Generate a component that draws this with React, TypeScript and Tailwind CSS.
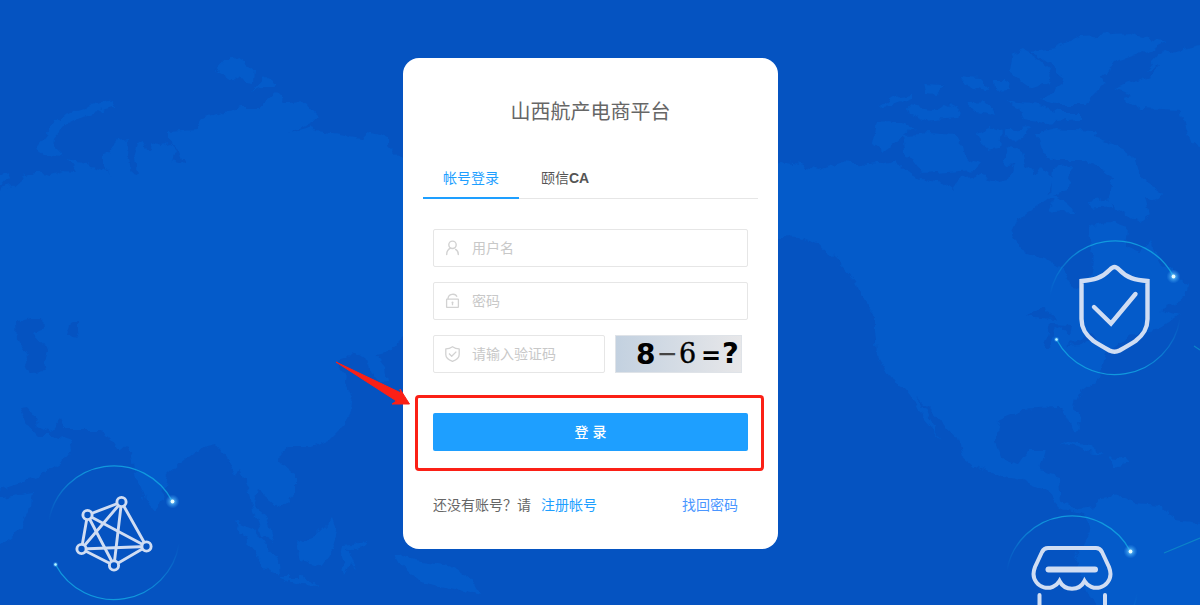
import React, { useState } from 'react';

const LAND = [
  // Europe and Asia
  'M-20 190L0 190L12 187L22 178L38 172L50 175L64 171L76 172L68 160L90 165L108 172L112 178L104 165L104 155L110 153L116 140L130 138L128 155L132 172L138 174L134 155L138 142L143 140L146 150L150 150L152 142L160 145L170 143L176 150L170 162L184 165L178 148L168 140L168 132L195 130L200 120L225 112L240 108L258 108L275 93L285 103L305 102L317 115L312 122L288 133L312 126L316 131L340 134L362 138L368 132L388 138L388 145L403 160L420 200L420 320L400 340L388 353L375 355L386 368L388 382L378 384L368 362L352 351L343 360L337 362L347 375L345 385L352 397L350 412L345 425L330 440L310 448L290 448L282 455L281 463L295 475L295 495L280 508L270 500L257 490L252 510L248 487L240 470L235 475L228 460L216 444L200 448L185 460L167 475L163 500L155 512L145 500L135 475L131 452L128 445L120 452L112 440L102 430L65 430L60 420L50 432L38 425L27 407L20 408L28 424L38 435L55 435L70 440L72 450L62 463L40 476L0 490L-20 494Z',
  'M-20 500L0 498L33 493L30 510L20 530L0 545L-20 550Z',
  'M113 100L100 103L80 110L65 115L55 120L50 130L36 148L45 155L62 157L53 148L54 138L65 125L85 115L114 107Z',
  'M216 70L225 60L236 57L243 62L255 72L254 82L240 80L228 77Z',
  'M252 91L265 77L278 82L275 87L262 87Z',
  'M0 175L8 173L10 178L3 186L0 188Z',
  'M235 522L255 530L280 560L281 577L268 572L250 545Z',
  'M281 577L300 577L318 586L300 585Z',
  'M250 503L265 515L274 543L262 535Z',
  'M296 543L315 535L332 518L338 533L333 550L322 566L300 560Z',
  'M343 545L368 542L366 545L348 550L356 570L350 562L345 575L341 557Z',
  'M395 553L415 560L450 565L470 578L480 595L450 588L420 582L402 566Z',
  // North and South America
  'M760 165L780 162L800 165L818 170L840 163L870 165L890 162L905 168L920 178L940 180L952 190L960 178L975 175L1000 182L1008 180L1015 160L1024 162L1035 176L1040 168L1052 180L1048 192L1060 196L1038 205L1020 218L1012 235L1020 250L1045 260L1062 270L1072 285L1076 290L1090 275L1094 255L1088 225L1110 222L1128 228L1126 246L1140 252L1150 240L1160 262L1188 285L1186 298L1160 310L1180 316L1160 328L1130 335L1105 355L1100 378L1078 395L1075 408L1079 425L1075 432L1067 415L1060 408L1020 410L1000 418L996 440L1003 460L1020 464L1030 450L1046 450L1040 470L1060 477L1062 502L1080 510L1095 508L1100 498L1120 495L1135 503L1160 505L1175 520L1220 525L1220 620L1100 620L1075 560L1090 530L1085 515L1060 508L1045 490L1020 480L1005 477L975 466L962 455L958 440L930 410L918 398L925 410L940 438L925 420L912 395L905 387L890 378L877 355L875 330L875 315L860 295L856 280L835 258L820 245L800 238L760 236Z',
  // Arctic islands
  'M876 122L890 121L915 128L900 138L883 152L872 142Z',
  'M903 135L930 133L955 135L963 145L966 158L982 162L975 170L950 172L922 174L905 152Z',
  'M878 108L895 97L912 94L912 99L892 106Z',
  'M908 107L935 110L945 103L960 110L957 118L925 121L910 115Z',
  'M924 84L944 85L936 94L926 93Z',
  'M960 76L980 78L990 88L984 90L966 84Z',
  'M966 104L990 103L996 116L975 112Z',
  'M995 81L1005 81L1009 90L996 91Z',
  'M1010 72L1012 55L1024 50L1040 60L1052 70L1048 82L1030 88Z',
  'M1028 50L1055 47L1080 36L1130 33L1165 43L1150 50L1120 60L1100 75L1104 84L1092 96L1088 106L1060 106L1040 100L1062 84L1058 70L1050 64Z',
  'M1006 101L1030 104L1060 112L1080 112L1080 120L1045 123L1024 120L1020 108Z',
  'M976 133L990 128L1003 132L1000 148L990 150L980 142Z',
  'M1008 129L1030 127L1022 138L1012 142L1006 136Z',
  'M1002 158L1010 146L1022 152L1025 163L1008 165Z',
  'M1036 133L1055 128L1096 130L1094 138L1108 142L1124 152L1136 160L1142 180L1162 192L1155 200L1145 196L1150 215L1140 222L1120 210L1108 200L1114 178L1095 165L1080 160L1055 160L1042 152Z',
  'M1052 168L1072 165L1068 190L1050 195Z',
  'M1048 210L1056 196L1076 211L1055 212Z',
  'M1088 202L1108 198L1112 206L1090 208Z',
  'M1115 88L1150 76L1160 65L1146 70L1160 54L1200 45L1220 42L1220 158L1190 142L1180 110L1140 108L1125 98L1132 96Z',
  // Caribbean
  'M1058 445L1072 441L1090 446L1103 455L1090 453L1072 444Z',
  'M1110 456L1125 458L1130 463L1116 467Z',
];

const WATER = [
  'M17 322L30 318L42 318L43 328L33 332L45 345L48 352L45 360L47 372L30 373L22 368L28 356L18 340Z',
  'M70 325L80 320L80 330L75 337L67 335Z',
  'M1028 317L1042 307L1058 320L1040 319Z',
  'M1044 346L1050 324L1072 325L1070 338L1064 326L1054 330L1050 346Z',
  'M1066 346L1092 334L1098 336L1080 345Z',
];

type OrbitProps = {
  x: number;
  y: number;
  children: React.ReactNode;
};

const Orbit: React.FC<OrbitProps> = ({ x, y, children }) => (
  <g transform={`translate(${x} ${y})`} fill="none">
    <path d="M-65 -12A66 66 0 0 1 58.5 -30.5" stroke="url(#arcTop)" strokeWidth="1.3" />
    <path d="M-58.5 32.5A66 66 0 0 0 65 12" stroke="url(#arcBottom)" strokeWidth="1.3" />
    <circle cx="58.5" cy="-30.5" r="7" fill="url(#glow)" />
    <circle cx="58.5" cy="-30.5" r="1.9" fill="#e8fdff" />
    <circle cx="-58.5" cy="32.5" r="3" fill="url(#glow)" />
    <circle cx="-58.5" cy="32.5" r="1.2" fill="#b5f3ff" />
    <g stroke="#d0ddf3" strokeLinecap="round">
      {children}
    </g>
  </g>
);

const nodes = [
  [7.5, -30],
  [-26.5, -17],
  [-32.5, 17],
  [32.5, 14.5],
  [0, 33.5],
];

const Background: React.FC = () => (
  <svg
    className="absolute inset-0 h-full w-full"
    viewBox="0 0 1200 605"
    preserveAspectRatio="xMidYMid slice"
    aria-hidden="true"
  >
    <defs>
      <filter id="coast" x="-20" y="0" width="1240" height="625" filterUnits="userSpaceOnUse" colorInterpolationFilters="sRGB">
        <feTurbulence type="fractalNoise" baseFrequency="0.09" numOctaves="3" seed="4" />
        <feDisplacementMap in="SourceGraphic" scale="10" xChannelSelector="R" yChannelSelector="G" />
      </filter>
      <linearGradient id="arcTop" gradientUnits="userSpaceOnUse" x1="-66" y1="-12" x2="-20" y2="-60">
        <stop offset="0" stopColor="#12a5e2" stopOpacity="0" />
        <stop offset="1" stopColor="#12a5e2" stopOpacity="0.85" />
      </linearGradient>
      <linearGradient id="arcBottom" gradientUnits="userSpaceOnUse" x1="66" y1="12" x2="20" y2="60">
        <stop offset="0" stopColor="#12a5e2" stopOpacity="0" />
        <stop offset="1" stopColor="#12a5e2" stopOpacity="0.85" />
      </linearGradient>
      <radialGradient id="glow">
        <stop offset="0" stopColor="#7fdcff" stopOpacity="0.9" />
        <stop offset="1" stopColor="#3fa9ff" stopOpacity="0" />
      </radialGradient>
    </defs>

    <g filter="url(#coast)">
      <path d={LAND.join('')} fill="#045bca" />
      <path d={WATER.join('')} fill="#0553c1" />
    </g>

    <path d="M1194 346L1200 350M1164 553L1200 538" stroke="#0c83c9" strokeWidth="1.2" />

    <Orbit x={114} y={532}>
      <g strokeWidth="2.9">
        {nodes.map(([x1, y1], i) =>
          nodes.slice(i + 1).map(([x2, y2], j) => (
            <line key={`${i}-${j}`} x1={x1} y1={y1} x2={x2} y2={y2} />
          ))
        )}
        {nodes.map(([cx, cy]) => (
          <circle key={cx} cx={cx} cy={cy} r="4.6" fill="#0553c1" />
        ))}
      </g>
    </Orbit>

    <Orbit x={1115} y={307}>
      <path
        d="M-0.5 -40Q-2.5 -40 -5.5 -37C-13 -29 -21 -27 -33.500 -26V12C-33.500 22 -29 28 -21.500 34Q-17 37 -5.500 43.500Q-0.500 46 4.500 43.500Q16 37 20.500 34C28 28 32.500 22 32.500 12V-26C20 -27 12 -29 4.500 -37Q1.500 -40 -0.500 -40Z"
        strokeWidth="4.4"
      />
      <path d="M-21 0L-4 16.5L20.5 -13" strokeWidth="4.4" />
    </Orbit>

    <Orbit x={1072} y={582}>
      <path
        d="M-24 -34H24Q28 -34 30 -30L37 -15Q38.5 -11 38.5 -8A14 14 0 0 1 12.5 -1A14 14 0 0 1 -12.5 -1A14 14 0 0 1 -38.5 -8Q-38.5 -11 -37 -15L-30 -30Q-28 -34 -24 -34Z"
        strokeWidth="4"
      />
      <path d="M-23.5 -12.5H23" strokeWidth="6" />
      <path d="M-32.5 13V40M33 13V40" strokeWidth="4" />
    </Orbit>
  </svg>
);

const UserIcon = () => (
  <svg width="16" height="16" viewBox="0 0 16 16" fill="none" stroke="currentColor" strokeWidth="1.4" strokeLinecap="round">
    <circle cx="7.5" cy="4.8" r="3.7" />
    <path d="M1.7 14.5C1.7 11.500 3 9.300 5.600 8.200M10.600 9.400C12.400 10.400 13.300 12.200 13.300 14.500" />
  </svg>
);

const LockIcon = () => (
  <svg width="16" height="16" viewBox="0 0 16 16" fill="none" stroke="currentColor" strokeWidth="1.3">
    <rect x="1.6" y="6.2" width="11.8" height="8.2" rx="0.5" />
    <path d="M3 6.2C3 0.2 10.500 0 12 3.800M7.500 9.300V12.300" />
    <circle cx="7.5" cy="9.4" r="1" fill="currentColor" stroke="none" />
  </svg>
);

const ShieldIcon = () => (
  <svg width="16" height="16" viewBox="0 0 16 16" fill="none" stroke="currentColor" strokeWidth="1.3" strokeLinejoin="round">
    <path d="M7.5 0.7C5.6 2 3.2 2.8 0.8 2.9V8.5C0.8 11.7 3.6 14 7.5 15.4C11.4 14 14.2 11.7 14.2 8.5V2.9C11.8 2.8 9.4 2 7.5 0.7Z" />
    <path d="M4 7.5L6.7 10.2L11.3 5.6" />
  </svg>
);

type FieldProps = {
  id: string;
  type?: string;
  placeholder: string;
  icon: React.ReactNode;
};

const Field: React.FC<FieldProps> = ({ id, type = 'text', placeholder, icon }) => (
  <div className="flex h-[38px] min-w-0 flex-1 items-center rounded-xs border border-[#e6e6e6] bg-white pl-[11px]">
    <label htmlFor={id} className="mr-[11px] shrink-0 text-[#d2d2d2]" aria-label={placeholder}>
      {icon}
    </label>
    <input
      id={id}
      name={id}
      type={type}
      placeholder={placeholder}
      className="h-full w-full min-w-0 bg-transparent text-sm text-[#555] outline-none placeholder:text-[#c8c8c8]"
    />
  </div>
);

const Captcha: React.FC = () => (
  <button type="button" className="h-[38px] w-[127px] shrink-0 border border-[#dfe3e8] bg-linear-to-r from-[#c3d1e0] to-[#e7e7e9]">
    <svg className="h-full w-full" viewBox="0 0 125 36">
      <text x="20" y="28" fontFamily="DejaVu Sans" fontWeight="700" fontSize="28">8</text>
      <text x="41" y="26" fontFamily="DejaVu Sans" fontSize="25" fill="#444">−</text>
      <text x="63" y="27" fontFamily="DejaVu Serif" fontSize="27" stroke="#000" strokeWidth="0.4">6</text>
      <text x="85" y="28" fontFamily="DejaVu Sans" fontWeight="700" fontSize="24">=</text>
      <text x="106" y="27" fontFamily="DejaVu Sans" fontWeight="700" fontSize="29">?</text>
    </svg>
  </button>
);

const App: React.FC = () => {
  const [tab, setTab] = useState('account');

  const tabClass = (name: string) =>
    tab === name
      ? 'h-[41px] cursor-pointer border-b-2 border-[#1e9fff] px-5 text-[#1e9fff]'
      : 'h-[41px] cursor-pointer border-b-2 border-transparent px-5 text-[#555]';

  return (
    <div className="relative min-h-screen overflow-hidden bg-[#0553c1] font-['Liberation_Sans','Noto_Sans_CJK_SC',sans-serif] text-sm">
      <Background />

      <main className="relative flex justify-center pt-[58px] pr-[19px]">
        <div className="w-[375px] rounded-2xl bg-white px-5 pt-10 pb-[34px]">
          <h1 className="text-center text-xl leading-7 text-[#666]">山西航产电商平台</h1>

          <div role="tablist" className="mt-8 flex h-[41px] gap-0.5 border-b border-[#e6e6e6]">
            <button type="button" role="tab" aria-selected={tab === 'account'} className={tabClass('account')} onClick={() => setTab('account')}>
              帐号登录
            </button>
            <button type="button" role="tab" aria-selected={tab === 'ca'} className={tabClass('ca')} onClick={() => setTab('ca')}>
              颐信<span className="font-bold">CA</span>
            </button>
          </div>

          <form className="mt-[30px] px-2.5" onSubmit={(e) => e.preventDefault()}>
            <div className="flex flex-col gap-[15px]">
              <div className="flex">
                <Field id="username" placeholder="用户名" icon={<UserIcon />} />
              </div>
              <div className="flex">
                <Field id="password" type="password" placeholder="密码" icon={<LockIcon />} />
              </div>
              <div className="flex gap-2.5 pr-1.5">
                <Field id="captcha" placeholder="请输入验证码" icon={<ShieldIcon />} />
                <Captcha />
              </div>
            </div>

            <div className="relative mt-10">
              <button type="submit" className="block h-[38px] w-full cursor-pointer rounded-xs bg-[#1e9fff] font-medium text-white">
                登 录
              </button>
              <div className="pointer-events-none absolute -top-[18px] -right-4 -bottom-5 -left-[18px] rounded-sm border-3 border-[#fb2016]" />
              <svg
                className="pointer-events-none absolute -top-[52px] -left-[98px]"
                width="76"
                height="46"
                viewBox="0 0 76 46"
                aria-hidden="true"
              >
                <path d="M1 1L66 32L65 28L74.5 43L57 43L61.5 40Z" fill="#fb2016" stroke="#fb2016" strokeLinejoin="round" />
              </svg>
            </div>

            <div className="mt-11 flex justify-between pr-2.5 leading-5">
              <p className="text-[#666]">
                还没有账号？请
                <a href="#register" className="ml-2.5 text-[#1e9fff]">注册帐号</a>
              </p>
              <a href="#forgot" className="text-[#4a96ff]">找回密码</a>
            </div>
          </form>
        </div>
      </main>
    </div>
  );
};

export default App;
